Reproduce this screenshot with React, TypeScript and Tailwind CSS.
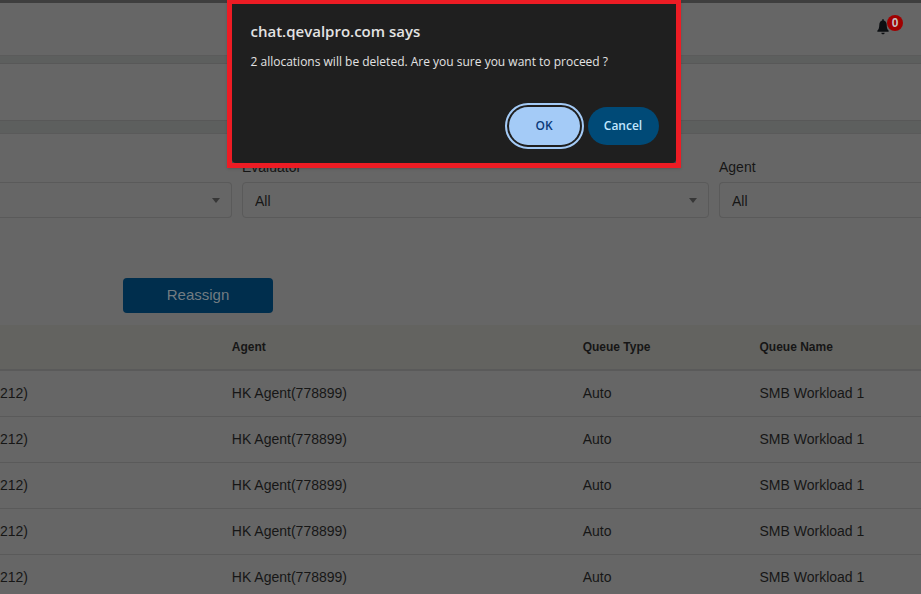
import { useState } from "react";

const rows = [1, 2, 3, 4, 5].map((id) => ({
    id,
    evaluator: "212)",
    agent: "HK Agent(778899)",
    queueType: "Auto",
    queueName: "SMB Workload 1",
}));

function BellIcon() {
    return (
        <svg width="12" height="16" viewBox="0 0 12 16" fill="currentColor" aria-hidden="true">
            <path d="M6.800 .9a.8.8 0 0 0-1.600 0v.6C3.300 2 2.400 3.600 2.300 5.800 2.200 8.500 1.900 10.300.5 11.600c-.5.5-.4 1.200.3 1.200h10.400c.7 0 .8-.7.3-1.200C10.100 10.300 9.800 8.500 9.700 5.800 9.600 3.600 8.700 2 6.800 1.500z" />
            <path d="M4.300 13.800h3.400c-.2 1-.8 1.500-1.700 1.500s-1.500-.5-1.700-1.500z" />
        </svg>
    );
}

function Header() {
    return (
        <header className="flex h-14 items-start justify-end border-t-3 border-b border-t-[#3e3e3e] border-b-[#5b5b5b] bg-[#666] pt-3 pr-[18px]">
            <button type="button" aria-label="Notifications" className="flex items-start text-[#0c0f12]">
                <span className="pt-1">
                    <BellIcon />
                </span>
                <span className="-ml-0.5 flex h-4 w-4 items-center justify-center rounded-full bg-[#a00000] text-xs font-bold text-[#c4c4c4]">
                    0
                </span>
            </button>
        </header>
    );
}

function Filter({ id, label, className = "", arrow = true }: { id: string; label: string; className?: string; arrow?: boolean }) {
    return (
        <div className="min-w-0">
            <label htmlFor={id} className="block h-5 text-sm">
                {label}
            </label>
            <div className="relative mt-[5px]">
                <select
                    id={id}
                    aria-label={label || "Status"}
                    className={`block h-9 w-full appearance-none border border-[#5a5a5a] bg-[#666] px-3 pt-0.5 text-sm ${className}`}
                >
                    <option>{label ? "All" : ""}</option>
                </select>
                {arrow && (
                    <svg width="8" height="5" viewBox="0 0 8 5" className="pointer-events-none absolute top-4 right-3 fill-[#373737]">
                        <path d="M0 0h8L4 5z" />
                    </svg>
                )}
            </div>
        </div>
    );
}

function AllocationTable() {
    return (
        <table className="w-full table-fixed border-collapse text-left text-sm">
            <thead>
                <tr className="h-[45px] border-b-2 border-[#5a5a5a] bg-[#636360] text-xs">
                    <th className="w-[24.3%]" aria-label="Evaluator" />
                    <th className="w-[38.1%] px-2">Agent</th>
                    <th className="w-[19.2%] px-2">Queue Type</th>
                    <th className="px-2">Queue Name</th>
                </tr>
            </thead>
            <tbody>
                {rows.map((row) => (
                    <tr key={row.id} className="h-[46px] border-b border-[#5a5a5a]">
                        <td>{row.evaluator}</td>
                        <td className="px-2">{row.agent}</td>
                        <td className="px-2">{row.queueType}</td>
                        <td className="px-2">{row.queueName}</td>
                    </tr>
                ))}
            </tbody>
        </table>
    );
}

function ConfirmDialog({ onClose }: { onClose: () => void }) {
    return (
        <div className="absolute inset-x-0 top-0 flex justify-center">
            <div className="-ml-3.5 w-[454px] border-5 border-t-4 border-[#ed1c24] bg-[#4a4a4a] shadow-sm">
                <div
                    role="alertdialog"
                    aria-labelledby="confirm-title"
                    aria-describedby="confirm-text"
                    className="rounded-b-sm bg-[#1f1f1f] px-[19px] pt-[15px] pb-[18px] font-['Open_Sans','Noto_Sans',sans-serif] text-[#e3e3e3]"
                >
                    <h2 id="confirm-title" className="text-[15px] leading-6 font-semibold">
                        chat.qevalpro.com says
                    </h2>
                    <p id="confirm-text" className="mt-[9px] text-xs leading-5">
                        2 allocations will be deleted. Are you sure you want to proceed ?
                    </p>
                    <div className="mt-[35px] mr-[-2px] flex justify-end gap-2 text-xs font-semibold">
                        <button
                            type="button"
                            onClick={onClose}
                            className="h-[38px] w-[71px] rounded-full bg-[#a4cbf7] text-[#0b3a7a] outline-2 outline-offset-2 outline-[#a4cbf7]"
                        >
                            OK
                        </button>
                        <button type="button" onClick={onClose} className="h-[38px] w-[71px] rounded-full bg-[#004a77] text-[#c2e7ff]">
                            Cancel
                        </button>
                    </div>
                </div>
            </div>
        </div>
    );
}

export default function App() {
    const [confirming, setConfirming] = useState(true);

    return (
        <div className="relative h-screen overflow-hidden bg-[#5d5f5e] font-['Liberation_Sans',Arial,sans-serif] text-[#161616]">
            <Header />
            <div className="mt-[7px] h-[58px] border-y border-[#585858] bg-[#666]" />
            <main className="mt-3 border-t border-[#5a5a5a] bg-[#666] pt-[23px]">
                <div className="grid grid-cols-[232fr_467fr_202fr] gap-[10px]">
                    <Filter id="status" label="" className="rounded-r border-l-0" />
                    <Filter id="evaluator" label="Evaluator" className="rounded" />
                    <Filter id="agent" label="Agent" className="rounded-l border-r-0" arrow={false} />
                </div>
                <button
                    type="button"
                    onClick={() => setConfirming(true)}
                    className="mt-[60px] mb-3 ml-[123px] block h-[35px] w-[150px] rounded bg-[#002e4d] text-[15px] text-[#727c82]"
                >
                    Reassign
                </button>
                <AllocationTable />
            </main>
            {confirming && <ConfirmDialog onClose={() => setConfirming(false)} />}
        </div>
    );
}
